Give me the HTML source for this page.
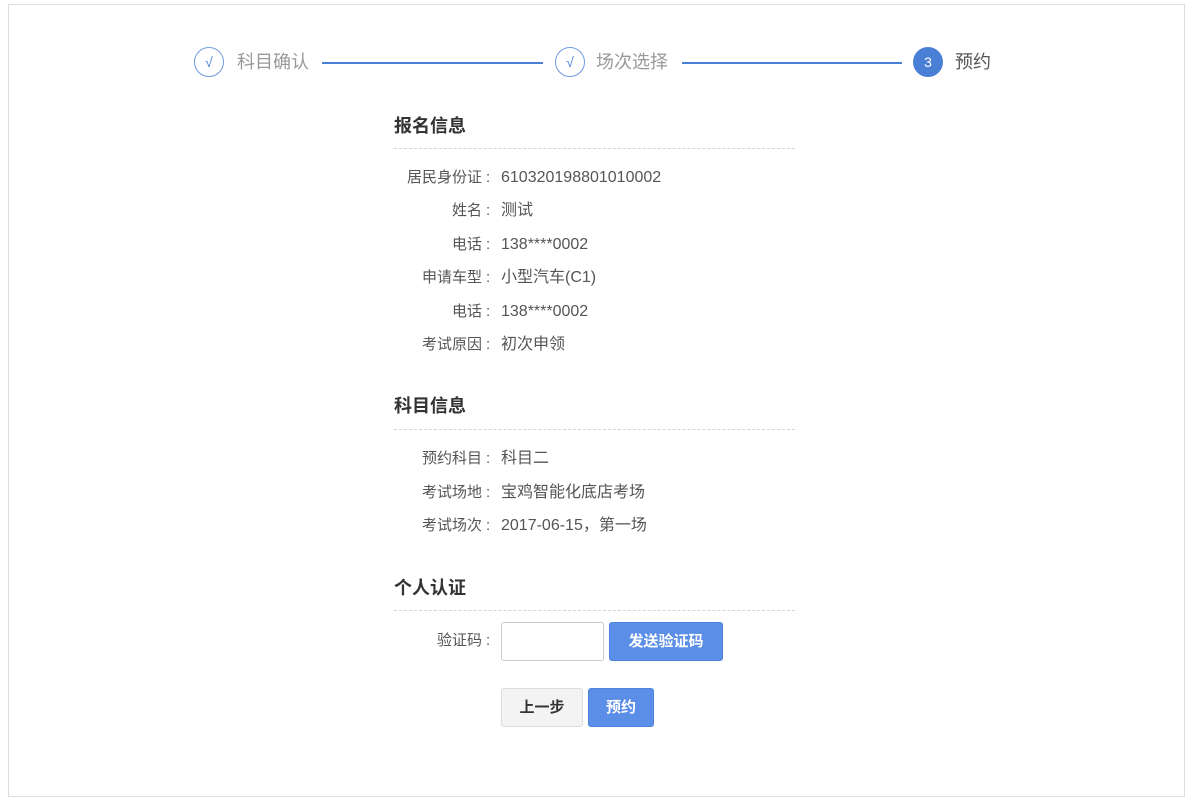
<!DOCTYPE html>
<html><head><meta charset="utf-8"><style>
body{margin:0;width:1192px;height:806px;background:#fff;font-family:"Liberation Sans","Noto Sans CJK SC",sans-serif;position:relative;overflow:hidden}
.a{position:absolute}
.box{left:8px;top:4px;width:1175px;height:791px;border:1px solid #ddd}
.c{width:28px;height:28px;border:1px solid #6f9ae0;border-radius:50%;color:#4a7fd6;font-size:14px;text-align:center;line-height:28px}
.st{font-size:18px;color:#999;line-height:24px}
.ln{height:2px;background:#4a7fd6}
h3{position:absolute;margin:0;left:394px;font-size:18px;font-weight:bold;color:#333;line-height:24px}
.d{position:absolute;left:394px;width:401px;border-top:1px dashed #d5d5d5}
.r{position:absolute;left:300px;font-size:15px;color:#555;line-height:20px;white-space:nowrap}
.r b{display:inline-block;width:182px;text-align:right;font-weight:normal}
.r i{display:inline-block;width:19px;text-align:left;font-style:normal;padding-left:4px;box-sizing:border-box}
.r span{font-size:16px}
.btn{position:absolute;border-radius:3px;font-size:15px;font-weight:bold;text-align:center;line-height:37px;color:#fff;background:#5b8ee6;border:1px solid #4f82dc;box-sizing:border-box}
</style></head><body>
<div class="a box"></div>
<div class="a c" style="left:194px;top:47px">√</div>
<div class="a st" style="left:237px;top:50px">科目确认</div>
<div class="a ln" style="left:322px;top:62px;width:221px"></div>
<div class="a c" style="left:555px;top:47px">√</div>
<div class="a st" style="left:596px;top:50px">场次选择</div>
<div class="a ln" style="left:682px;top:62px;width:220px"></div>
<div class="a c" style="left:913px;top:47px;background:#4a7fd6;color:#fff;border-color:#4a7fd6">3</div>
<div class="a st" style="left:955px;top:50px;color:#555">预约</div>

<h3 style="top:114px">报名信息</h3><div class="d" style="top:148px"></div>
<div class="r" style="top:168px"><b>居民身份证</b><i>:</i><span>610320198801010002</span></div>
<div class="r" style="top:201px"><b>姓名</b><i>:</i><span>测试</span></div>
<div class="r" style="top:235px"><b>电话</b><i>:</i><span>138****0002</span></div>
<div class="r" style="top:268px"><b>申请车型</b><i>:</i><span>小型汽车(C1)</span></div>
<div class="r" style="top:302px"><b>电话</b><i>:</i><span>138****0002</span></div>
<div class="r" style="top:335px"><b>考试原因</b><i>:</i><span>初次申领</span></div>

<h3 style="top:394px">科目信息</h3><div class="d" style="top:429px"></div>
<div class="r" style="top:449px"><b>预约科目</b><i>:</i><span>科目二</span></div>
<div class="r" style="top:483px"><b>考试场地</b><i>:</i><span>宝鸡智能化底店考场</span></div>
<div class="r" style="top:516px"><b>考试场次</b><i>:</i><span>2017-06-15，第一场</span></div>

<h3 style="top:576px">个人认证</h3><div class="d" style="top:610px"></div>
<div class="r" style="top:631px"><b>验证码</b><i>:</i></div>
<div class="a" style="left:501px;top:622px;width:103px;height:39px;border:1px solid #ccc;border-radius:3px;box-sizing:border-box"></div>
<div class="btn" style="left:609px;top:622px;width:114px;height:39px">发送验证码</div>
<div class="btn" style="left:501px;top:688px;width:82px;height:39px;background:#f3f3f3;border-color:#ddd;color:#333">上一步</div>
<div class="btn" style="left:588px;top:688px;width:66px;height:39px">预约</div>
</body></html>
